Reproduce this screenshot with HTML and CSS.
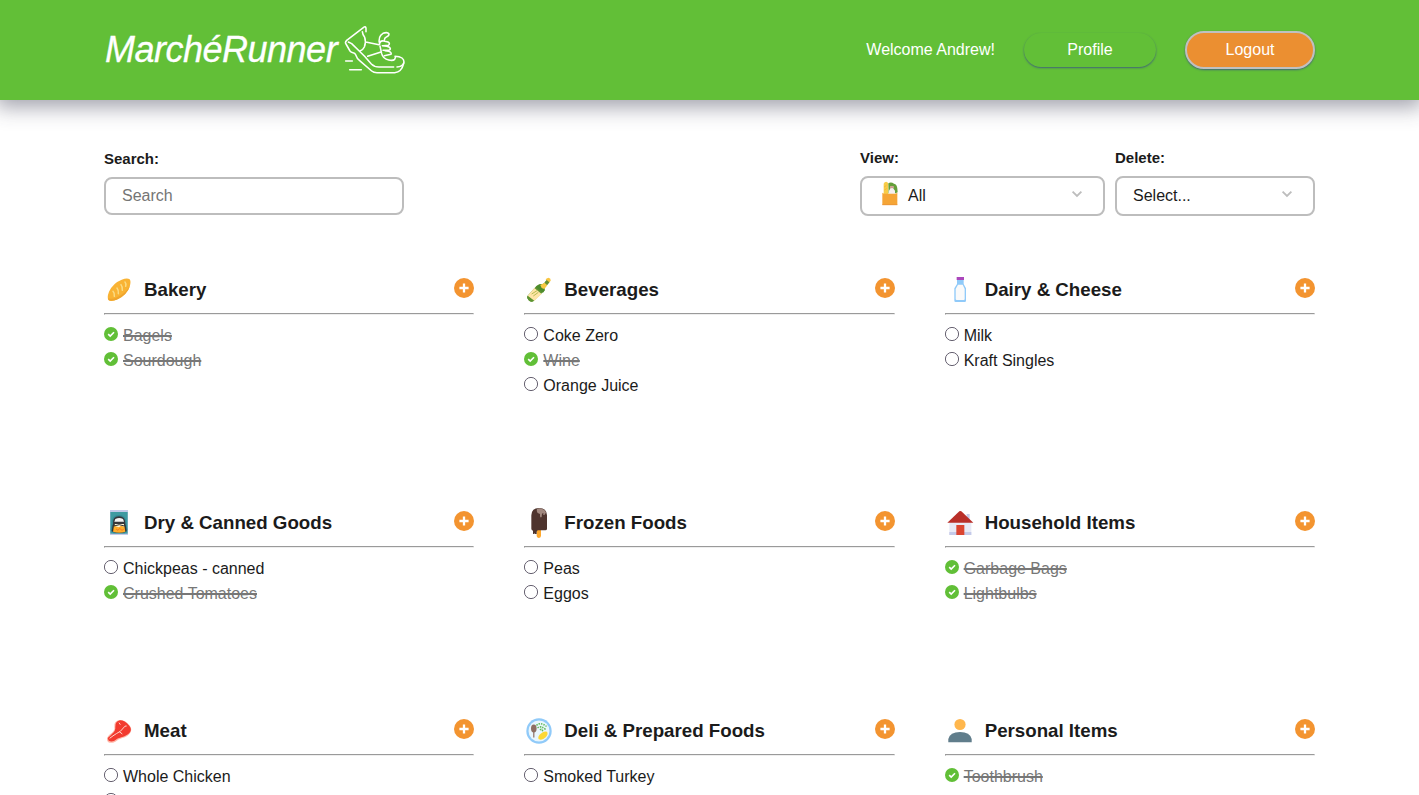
FILE: index.html
```html
<!DOCTYPE html>
<html lang="en">
<head>
<meta charset="utf-8">
<title>MarchéRunner</title>
<link rel="stylesheet" href="styles.css">
</head>
<body>
<svg class="sprite" aria-hidden="true">
  <symbol id="plus" viewBox="0 0 20 20"><circle cx="10" cy="10" r="10" fill="#f39430"/><path d="M10 5.400v9.200M5.400 10h9.200" stroke="#fff" stroke-width="2.300"/></symbol>
  <symbol id="done" viewBox="0 0 14 14"><circle cx="7" cy="7" r="7" fill="#61bf37"/><path d="M4.200 7.100l2 2 3.800-3.900" fill="none" stroke="#fff" stroke-width="1.600"/></symbol>
  <symbol id="open" viewBox="0 0 14 14"><circle cx="7" cy="7" r="6.600" fill="#fff" stroke="#4b4657" stroke-width=".85"/></symbol>
</svg>
<header class="topbar">
  <div class="wrap topbar-inner">
    <a class="logo">
      <span class="logo-text">MarchéRunner</span>
      <svg class="shoe" viewBox="763 43 186 153" fill="none" stroke="#fff" stroke-width="4.600" stroke-linecap="round" stroke-linejoin="round">
        <path d="M829 66V55Q827 49 822 53L771 92Q765 98 769 103L781 124Q784 128 790 129Q796 130 798 135Q802 147 810 153L846 184Q852 189 862 189H915Q936 187 942 162Q945 151 937 145Q930 140 916 140"/>
        <path d="M776 97L786 102L824 139L845 163Q854 172 868 172H912M922 172Q938 171 942 160"/>
        <path d="M818 66Q819 76 825 83Q830 97 824 112Q820 121 811 124M828 97L868 105M834 140L874 127"/>
        <path d="M870 104Q864 80 880 71Q894 66 898 73Q898 79 890 82Q884 84 884 92M870 101Q872 92 882 94L895 97Q903 102 896 107L880 108M871 109L876 132Q880 148 897 151Q910 154 915 149L918 141M878 108L891 110Q901 112 902 117Q902 122 893 122H880M886 123L897 125Q907 129 904 134L884 138"/>
        <path d="M768 154H788M780 180H815"/>
      </svg>
    </a>
    <nav class="account">
      <span class="welcome">Welcome Andrew!</span>
      <button class="btn btn-profile">Profile</button>
      <button class="btn btn-logout">Logout</button>
    </nav>
  </div>
</header>
<main class="wrap">
  <section class="controls">
    <div class="field field-search">
      <label class="label" for="q">Search:</label>
      <input class="search" id="q" type="text" placeholder="Search">
    </div>
    <div class="field field-view">
      <span class="label">View:</span>
      <div class="select">
        <svg class="bag" viewBox="98 124 48 74"><path d="M103 165V132Q105 126 111 126Q116 127 117 133V165Z" fill="#f8cc48"/><path d="M104 142l7-5M105 151l7-5" stroke="#e9ad36" stroke-width="2"/><path d="M117 130Q126 125 134 132Q143 134 144 146L145 157L137 161L118 160Z" fill="#649f3a"/><path d="M123 139h9v7l5 7v12h-18v-12l4-7z" fill="#f5efef"/><path d="M122 139h11v6h-11z" fill="#cf9b8c"/><path d="M99 159L104 162H139L144 159V195H99Z" fill="#f5a536"/><path d="M99 193H144V196H99Z" fill="#eb922e"/></svg>
        <span class="value">All</span>
        <svg class="chev" viewBox="0 0 12 8"><path d="M1.600 1.600L6 6l4.400-4.400" fill="none" stroke="#bdbdbd" stroke-width="1.800"/></svg>
      </div>
    </div>
    <div class="field field-delete">
      <span class="label">Delete:</span>
      <div class="select">
        <span class="value">Select...</span>
        <svg class="chev" viewBox="0 0 12 8"><path d="M1.600 1.600L6 6l4.400-4.400" fill="none" stroke="#bdbdbd" stroke-width="1.800"/></svg>
      </div>
    </div>
  </section>
  <section class="grid">
    <article class="card">
      <div class="head">
        <svg class="icon" viewBox="27 30 90 90"><path d="M42 80Q54 54 80 44Q97 37 104 43Q109 49 104 65Q96 88 70 102Q49 112 41 106Q35 98 42 80Z" fill="#f9b334"/><path d="M40 104Q45 110 65 104Q98 88 105 62Q93 84 66 97Q49 105 40 99Z" fill="#efa52e"/><g stroke="#fadb83" stroke-width="4.500" stroke-linecap="round" fill="none"><path d="M54 79Q59 84 58 94"/><path d="M66 69Q71 75 70 86"/><path d="M78 59Q83 65 82 76"/><path d="M90 51Q94 55 92 64"/></g></svg>
        <h3 class="title">Bakery</h3><svg class="add"><use href="#plus"/></svg>
      </div>
      <hr class="rule">
      <ul class="items">
        <li class="item is-done"><svg class="mark"><use href="#done"/></svg>Bagels</li>
        <li class="item is-done"><svg class="mark"><use href="#done"/></svg>Sourdough</li>
      </ul>
    </article>
    <article class="card">
      <div class="head">
        <svg class="icon" viewBox="27 30 90 90"><path d="M37 93L65 62Q74 55 83 58L98 44L104 50L90 65Q91 75 85 80L56 108Q49 113 41 106Q34 99 37 93Z" fill="#5e9432"/><path d="M38 92L58 69L80 87L58 107Z" fill="#ffe5a7"/><path d="M37 93Q34 100 42 107Q49 113 56 108Z" fill="#5e9432"/><path d="M50 87L66 77M55 93L70 82" stroke="#b5bd52" stroke-width="3"/><path d="M62 66L76 57L80 69L90 75L84 83L74 76Z" fill="#4c8b2c"/><path d="M76 60L89 53L97 61L88 72L80 69Z" fill="#f7c944"/><path d="M92 44Q93 39 101 38Q108 40 107 47L102 53Z" fill="#f8c540"/><path d="M89 52L95 45L103 52L97 60Z" fill="#638f32"/></svg>
        <h3 class="title">Beverages</h3><svg class="add"><use href="#plus"/></svg>
      </div>
      <hr class="rule">
      <ul class="items">
        <li class="item"><svg class="mark"><use href="#open"/></svg>Coke Zero</li>
        <li class="item is-done"><svg class="mark"><use href="#done"/></svg>Wine</li>
        <li class="item"><svg class="mark"><use href="#open"/></svg>Orange Juice</li>
      </ul>
    </article>
    <article class="card">
      <div class="head">
        <svg class="icon" viewBox="29 30 90 90"><path d="M65 45H85V57L92 70V107Q92 111 88 111H61Q57 111 57 107V70L65 57Z" fill="#90caf9"/><path d="M68 59H82L88 72V102Q88 105 85 105H64Q61 105 61 102V72Z" fill="#fafafa"/><path d="M64 36H86V45H64Z" fill="#ab47bc"/></svg>
        <h3 class="title">Dairy &amp; Cheese</h3><svg class="add"><use href="#plus"/></svg>
      </div>
      <hr class="rule">
      <ul class="items">
        <li class="item"><svg class="mark"><use href="#open"/></svg>Milk</li>
        <li class="item"><svg class="mark"><use href="#open"/></svg>Kraft Singles</li>
      </ul>
    </article>
    <article class="card">
      <div class="head">
        <svg class="icon" viewBox="27 24 90 90"><path d="M45 30H99V105H45Z" fill="#c5cae9"/><path d="M46 36H98V101H46Z" fill="#3f9ba1"/><path d="M50 70Q50 45 72 45Q94 45 94 70L97 90L89 100H55L47 90Z" fill="#348894"/><path d="M54 70Q53 49 72 49Q91 49 91 70V76H54Z" fill="#37373b"/><path d="M61 57Q73 51 84 57L87 65H58Z" fill="#f5f5f5"/><path d="M53 74H92L95 94Q73 104 50 94Z" fill="#303436"/><path d="M57 77Q73 70 88 77L91 95Q73 101 54 95Z" fill="#ffad2a"/><path d="M59 72H87V80L78 77L72 82L61 79Z" fill="#fff4d5"/><path d="M57 78Q73 70 88 78" stroke="#303436" stroke-width="3" fill="none"/><path d="M63 87l6 4 5-6 7 6 5-3" stroke="#f57c22" stroke-width="3" fill="none"/></svg>
        <h3 class="title">Dry &amp; Canned Goods</h3><svg class="add"><use href="#plus"/></svg>
      </div>
      <hr class="rule">
      <ul class="items">
        <li class="item"><svg class="mark"><use href="#open"/></svg>Chickpeas - canned</li>
        <li class="item is-done"><svg class="mark"><use href="#done"/></svg>Crushed Tomatoes</li>
      </ul>
    </article>
    <article class="card">
      <div class="head">
        <svg class="icon" viewBox="27 24 90 90"><path d="M65 86H78V108Q77 114 71 114Q65 113 65 108Z" fill="#ffa82d"/><path d="M49 46Q50 24 72 24Q95 24 96 46V86Q96 91 91 91H68L65 95V102H60V99Q58 104 54 101V92Q49 91 49 86Z" fill="#4e342e"/><path d="M66 27Q72 23 80 26Q91 29 93 38L88 45H85V39L81 41L80 51Q76 54 75 49V42L68 39Q64 34 66 27Z" fill="#a1887f"/></svg>
        <h3 class="title">Frozen Foods</h3><svg class="add"><use href="#plus"/></svg>
      </div>
      <hr class="rule">
      <ul class="items">
        <li class="item"><svg class="mark"><use href="#open"/></svg>Peas</li>
        <li class="item"><svg class="mark"><use href="#open"/></svg>Eggos</li>
      </ul>
    </article>
    <article class="card">
      <div class="head">
        <svg class="icon" viewBox="29 24 90 90"><path d="M94 42H103V62H94Z" fill="#c5cae9"/><path d="M42 66L75 38L108 66V105H42Z" fill="#e8eaf6"/><path d="M42 96H108V105H42Z" fill="#c5cae9"/><path d="M63 75H87V105H63Z" fill="#db4531"/><path d="M36 68L72 34Q75 32 78 34L114 68Z" fill="#b92f29"/></svg>
        <h3 class="title">Household Items</h3><svg class="add"><use href="#plus"/></svg>
      </div>
      <hr class="rule">
      <ul class="items">
        <li class="item is-done"><svg class="mark"><use href="#done"/></svg>Garbage Bags</li>
        <li class="item is-done"><svg class="mark"><use href="#done"/></svg>Lightbulbs</li>
      </ul>
    </article>
    <article class="card">
      <div class="head">
        <svg class="icon" viewBox="27 18 90 90"><path d="M36 88Q35 79 51 68Q60 61 58 52Q55 32 75 30Q91 29 105 48Q112 58 106 68Q99 80 82 84Q70 88 61 95Q49 101 40 97Q36 94 36 88Z" fill="#ffb9aa"/><path d="M38 84Q46 78 53 70Q62 62 61 50Q61 33 75 31Q89 31 103 47Q111 57 105 67Q96 78 79 82Q68 84 57 93Q48 96 41 92Z" fill="#f23b2f"/><path d="M44 85Q54 77 64 71Q78 65 85 54Q90 46 95 48M73 65L82 72M72 38L76 44" fill="none" stroke="#ffd5ca" stroke-width="3"/></svg>
        <h3 class="title">Meat</h3><svg class="add"><use href="#plus"/></svg>
      </div>
      <hr class="rule">
      <ul class="items">
        <li class="item"><svg class="mark"><use href="#open"/></svg>Whole Chicken</li>
        <li class="item"><svg class="mark"><use href="#open"/></svg>Ground Beef</li>
      </ul>
    </article>
    <article class="card">
      <div class="head">
        <svg class="icon" viewBox="0 0 30 30"><circle cx="15" cy="15" r="12.700" fill="#90caf9"/><circle cx="15" cy="15" r="10.500" fill="#e9f6fd"/><ellipse cx="9.800" cy="12.500" rx="2.800" ry="4" fill="#8d6e63"/><path d="M9.800 14v7.500" stroke="#8d6e63" stroke-width="1.200"/><path d="M14.500 23Q13.500 20 17 17.500Q20 14.800 23 15.800Q24.500 18 22 21Q18 25 14.500 23Z" fill="#fdd835"/><path d="M12.500 9.500Q16 5.500 22.500 10.500M13.500 12Q17 9 22 14M16 14Q18 12 19 16" fill="none" stroke="#61ba58" stroke-width="1.500" stroke-dasharray="1.500 1"/></svg>
        <h3 class="title">Deli &amp; Prepared Foods</h3><svg class="add"><use href="#plus"/></svg>
      </div>
      <hr class="rule">
      <ul class="items">
        <li class="item"><svg class="mark"><use href="#open"/></svg>Smoked Turkey</li>
      </ul>
    </article>
    <article class="card">
      <div class="head">
        <svg class="icon" viewBox="0 0 30 30"><circle cx="15" cy="8.500" r="5.600" fill="#ffb74d"/><path d="M3.300 26.300V23Q5 16 15 16T26.700 23V26.300Z" fill="#607d8b"/></svg>
        <h3 class="title">Personal Items</h3><svg class="add"><use href="#plus"/></svg>
      </div>
      <hr class="rule">
      <ul class="items">
        <li class="item is-done"><svg class="mark"><use href="#done"/></svg>Toothbrush</li>
      </ul>
    </article>
  </section>
</main>
</body>
</html>
```
FILE: styles.css
```css
* { box-sizing: border-box; }
html { overflow: hidden; }
body {
  margin: 0;
  height: 795px;
  overflow: hidden;
  background: #fff;
  color: #1b1b1b;
  font-family: "Liberation Sans", Arial, sans-serif;
  font-size: 16px;
}
svg { display: block; flex: none; }
.sprite { display: none; }
.wrap { width: 1211px; margin: 0 auto; }
.topbar {
  height: 100px;
  background: #62bf37;
  box-shadow: 0 3px 20px 4px rgba(50, 50, 75, .46);
}
.topbar-inner { display: flex; justify-content: space-between; height: 100%; }
.logo { display: flex; color: #fff; }
.logo-text {
  width: 240px;
  padding: 29px 0 0 1px;
  font-size: 36px;
  font-style: italic;
  line-height: 41px;
  letter-spacing: -.5px;
  -webkit-text-stroke: .3px #fff;
}
.shoe { width: 62px; height: 51px; margin-top: 24px; }
.account { display: flex; align-items: center; color: #fff; }
.welcome { margin-right: 29px; }
.btn {
  padding: 0;
  border: 0;
  border-radius: 20px;
  color: #fff;
  font: 16px "Liberation Sans", Arial, sans-serif;
}
.btn-profile {
  width: 132px;
  height: 34px;
  margin-right: 29px;
  background: #62bf37;
  box-shadow: 0 1px 2px rgba(50, 60, 150, .7);
}
.btn-logout {
  width: 130px;
  height: 38px;
  border: 2px solid #c0c0c0;
  background: #eb8f31;
  box-shadow: 0 1px 2px rgba(50, 60, 150, .7);
}
.controls { display: flex; align-items: flex-start; padding-top: 48px; }
.label { display: block; font-size: 15px; font-weight: bold; line-height: 20px; }
.field-search { width: 300px; margin-right: auto; padding-top: 1px; }
.search {
  display: block;
  width: 100%;
  height: 38px;
  margin-top: 8px;
  padding: 0 16px;
  border: 2px solid #bdbdbd;
  border-radius: 8px;
  background: #fff;
  font: 16px "Liberation Sans", Arial, sans-serif;
}
.search::placeholder { color: #757575; }
.field-view { width: 245px; margin-right: 10px; }
.field-delete { width: 200px; }
.select {
  display: flex;
  align-items: center;
  height: 40px;
  margin-top: 8px;
  padding: 0 20px 0 16px;
  border: 2px solid #bdbdbd;
  border-radius: 8px;
}
.bag { width: 16px; height: 25px; margin: -5px 10px 0 4px; }
.chev { width: 12px; height: 8px; margin: -4px 0 0 auto; }
.grid {
  display: grid;
  grid-template-columns: repeat(3, minmax(0, 1fr));
  column-gap: 50px;
  padding-top: 58px;
}
.card { padding-bottom: 109px; }
.head { display: flex; align-items: flex-start; height: 39px; }
.icon { width: 30px; height: 30px; margin: 1px 10px 0 0; }
.title { margin: 5px auto 0 0; font-size: 18.72px; line-height: 21px; }
.add { width: 20px; height: 20px; margin-top: 4px; }
.rule { margin: 0 0 8px; }
.items { margin: 0; padding: 0; list-style: none; }
.item { display: flex; height: 25px; line-height: 25px; }
.mark { width: 14px; height: 14px; margin: 4px 5px 0 0; }
.is-done { color: #777; text-decoration: line-through 2px; }
```
